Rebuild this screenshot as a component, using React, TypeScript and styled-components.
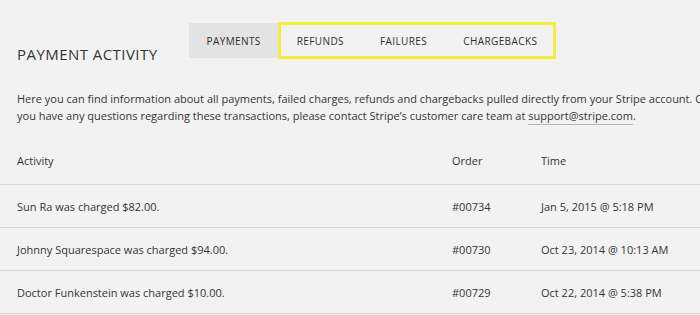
import React from 'react'
import styled, { createGlobalStyle } from 'styled-components'

const GlobalStyle = createGlobalStyle`
  html, body {
    margin: 0;
    padding: 0;
    background: #f2f2f2;
    overflow: hidden;
  }
  body {
    font-family: 'Open Sans', 'Liberation Sans', sans-serif;
    color: #353535;
  }
`

type Payment = {
  activity: string
  order: string
  time: string
}

const payments: Payment[] = [
  { activity: 'Sun Ra was charged $82.00.', order: '#00734', time: 'Jan 5, 2015 @ 5:18 PM' },
  { activity: 'Johnny Squarespace was charged $94.00.', order: '#00730', time: 'Oct 23, 2014 @ 10:13 AM' },
  { activity: 'Doctor Funkenstein was charged $10.00.', order: '#00729', time: 'Oct 22, 2014 @ 5:38 PM' },
]

const Page = styled.div`
  width: 700px;
  height: 315px;
  overflow: hidden;
`

const TopBar = styled.div`
  display: flex;
  align-items: flex-end;
  padding: 23px 0 0 17px;
`

const Title = styled.h1`
  margin: 0 31px 0 0;
  font-size: 15px;
  font-weight: 400;
  letter-spacing: 0.45px;
  line-height: 20px;
  position: relative;
  top: 6px;
  white-space: nowrap;
`

const Tabs = styled.div`
  display: flex;
  align-self: flex-start;
`

const TabGroup = styled.div`
  display: flex;
  outline: 3px solid #f2ef3c;
  outline-offset: -2px;
`

const Tab = styled.div<{ $active?: boolean }>`
  height: 35px;
  display: flex;
  align-items: center;
  padding: 0 18px;
  font-size: 10px;
  letter-spacing: 0.4px;
  text-transform: uppercase;
  color: #2e2e2e;
  background: ${(p) => (p.$active ? '#e3e3e3' : 'transparent')};
`

const Intro = styled.p`
  margin: 32px 0 0 17px;
  font-size: 11px;
  line-height: 17px;
  white-space: nowrap;
`

const Link = styled.span`
  border-bottom: 1px solid #b5b5b5;
  padding-bottom: 1px;
`

const Table = styled.div`
  margin-top: 12px;
`

const Row = styled.div<{ $head?: boolean }>`
  display: grid;
  grid-template-columns: 435px 89px 1fr;
  align-items: center;
  height: ${(p) => (p.$head ? '48px' : '42px')};
  padding-left: 17px;
  border-bottom: 1px solid #d6d6d6;
  font-size: 11px;
  white-space: nowrap;
`

export default function App() {
  return (
    <Page>
      <GlobalStyle />
      <TopBar>
        <Title>PAYMENT ACTIVITY</Title>
        <Tabs>
          <Tab $active>Payments</Tab>
          <TabGroup>
            <Tab>Refunds</Tab>
            <Tab>Failures</Tab>
            <Tab>Chargebacks</Tab>
          </TabGroup>
        </Tabs>
      </TopBar>
      <Intro>
        Here you can find information about all payments, failed charges, refunds and chargebacks pulled directly from your Stripe account. Or if
        <br />
        you have any questions regarding these transactions, please contact Stripe&rsquo;s customer care team at <Link>support@stripe.com</Link>.
      </Intro>
      <Table>
        <Row $head>
          <span>Activity</span>
          <span>Order</span>
          <span>Time</span>
        </Row>
        {payments.map((p) => (
          <Row key={p.order}>
            <span>{p.activity}</span>
            <span>{p.order}</span>
            <span>{p.time}</span>
          </Row>
        ))}
      </Table>
    </Page>
  )
}
